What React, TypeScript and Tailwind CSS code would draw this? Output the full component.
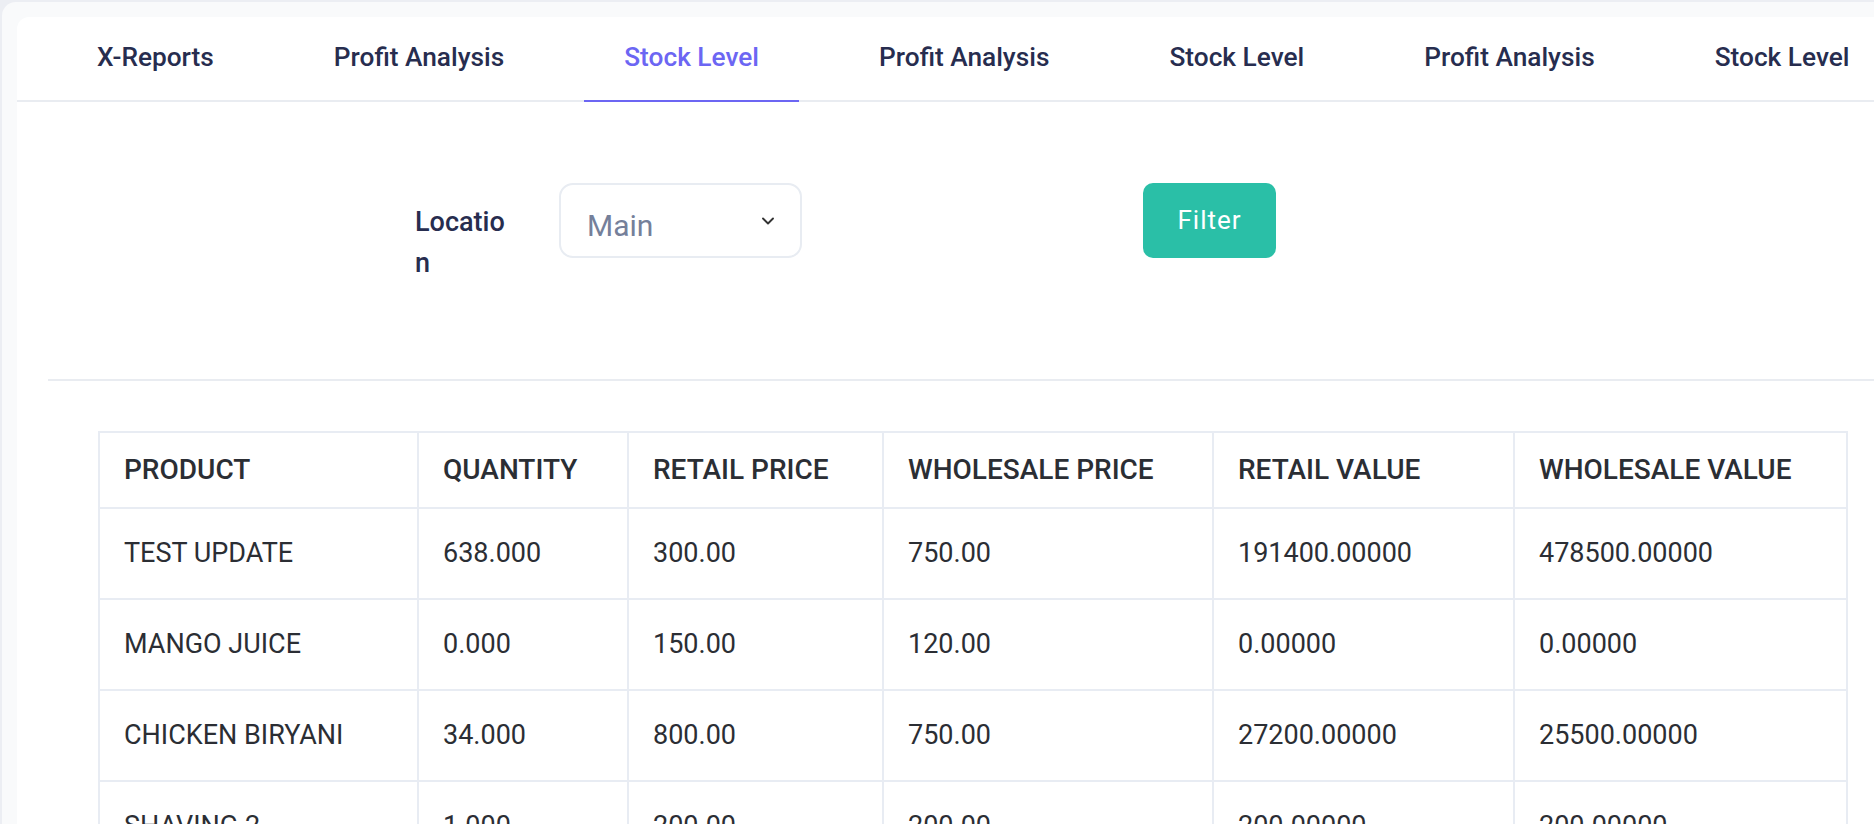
import { ChevronDown } from "lucide-react";

type Row = {
	product: string;
	quantity: string;
	retailPrice: string;
	wholesalePrice: string;
	retailValue: string;
	wholesaleValue: string;
};

const tabs = [
	"X-Reports",
	"Profit Analysis",
	"Stock Level",
	"Profit Analysis",
	"Stock Level",
	"Profit Analysis",
	"Stock Level",
];

const headers = [
	"PRODUCT",
	"QUANTITY",
	"RETAIL PRICE",
	"WHOLESALE PRICE",
	"RETAIL VALUE",
	"WHOLESALE VALUE",
];

const rows: Row[] = [
	{
		product: "TEST UPDATE",
		quantity: "638.000",
		retailPrice: "300.00",
		wholesalePrice: "750.00",
		retailValue: "191400.00000",
		wholesaleValue: "478500.00000",
	},
	{
		product: "MANGO JUICE",
		quantity: "0.000",
		retailPrice: "150.00",
		wholesalePrice: "120.00",
		retailValue: "0.00000",
		wholesaleValue: "0.00000",
	},
	{
		product: "CHICKEN BIRYANI",
		quantity: "34.000",
		retailPrice: "800.00",
		wholesalePrice: "750.00",
		retailValue: "27200.00000",
		wholesaleValue: "25500.00000",
	},
	{
		product: "SHAVING 2",
		quantity: "1.000",
		retailPrice: "200.00",
		wholesalePrice: "200.00",
		retailValue: "200.00000",
		wholesaleValue: "200.00000",
	},
];

export default function App() {
	const active = 2;

	return (
		<div className="w-screen h-screen overflow-hidden bg-[#eceef3] pt-[2px] pl-[2px] font-['Roboto',sans-serif]">
			<div className="w-[1940px] h-[900px] bg-[#f9fafb] rounded-tl-[14px] pt-[15px] pl-[15px]">
				<div className="bg-white rounded-tl-[12px] h-full">
					{/* tabs */}
					<nav className="flex h-[85px] border-b-2 border-[#e9ecf1] pl-[40px] gap-[40px]">
						{tabs.map((tab, i) => (
							<button
								key={i}
								className={`px-10 -mb-[2px] pb-[2px] border-b-2 text-[26.25px] font-medium whitespace-nowrap ${
									i === active
										? "text-[#6c66f3] border-[#6c66f3]"
										: "text-[#272d4f] border-transparent"
								}`}>
								{tab}
							</button>
						))}
					</nav>

					{/* filter */}
					<div className="flex items-start h-[277px] pt-[81px] pl-[398px]">
						<label className="mt-[19px] w-[92px] break-all text-[27px] leading-[41px] font-medium text-[#272d4f]">
							Location
						</label>
						<div className="ml-[52px] w-[243px] h-[75px] border-2 border-[#e8ecf2] rounded-[14px] flex items-center justify-between pl-[26px] pr-[22px]">
							<span className="pt-[10px] text-[30px] text-[#75809a]">Main</span>
							<ChevronDown className="w-[20px] h-[20px] text-[#333]" strokeWidth={2.25} />
						</div>
						<button className="ml-[341px] w-[133px] h-[75px] rounded-[10px] bg-[#2abfa7] text-white text-[26px] tracking-[1px]">
							Filter
						</button>
					</div>
					<div className="ml-[31px] border-t-2 border-[#e9ecf1]" />

					{/* table */}
					<div className="pl-[81px] pt-[50px]">
						<div className="w-[1750px] border-l-2 border-t-2 border-[#e8ecf3] text-[#2b2e34] text-[27px]">
							<div className="grid grid-cols-[319px_210px_255px_330px_301px_333px] h-[76px]">
								{headers.map((h) => (
									<div
										key={h}
										className="border-r-2 border-b-2 border-[#e8ecf3] pl-[24px] flex items-center text-[28px] font-medium whitespace-nowrap">
										{h}
									</div>
								))}
							</div>
							{rows.map((r) => (
								<div
									key={r.product}
									className="grid grid-cols-[319px_210px_255px_330px_301px_333px] h-[91px]">
									{[
										r.product,
										r.quantity,
										r.retailPrice,
										r.wholesalePrice,
										r.retailValue,
										r.wholesaleValue,
									].map((v, j) => (
										<div
											key={j}
											className="border-r-2 border-b-2 border-[#e8ecf3] pl-[24px] flex items-center whitespace-nowrap">
											{v}
										</div>
									))}
								</div>
							))}
						</div>
					</div>
				</div>
			</div>
		</div>
	);
}
